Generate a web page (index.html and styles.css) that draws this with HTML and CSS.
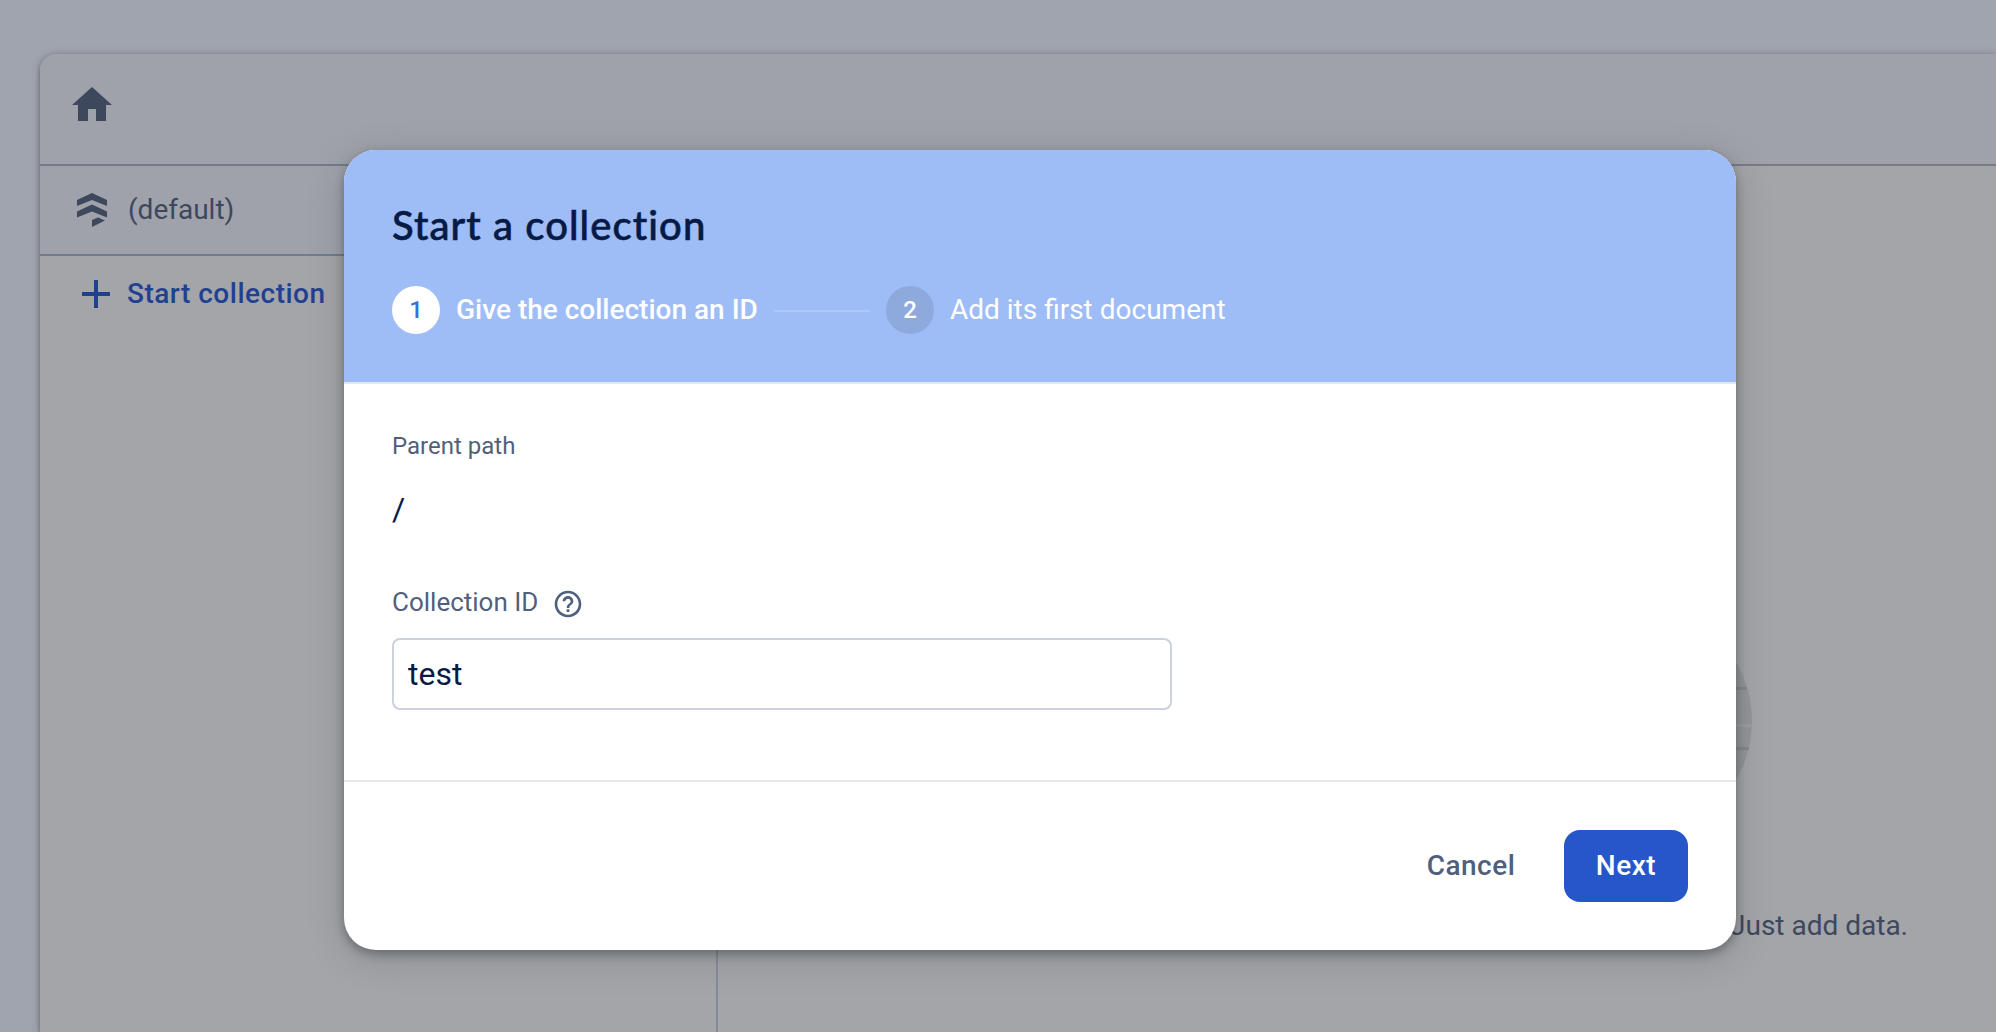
FILE: index.html
```html
<!DOCTYPE html>
<html lang="en">
<head>
<meta charset="utf-8">
<title>Start a collection</title>
<link rel="stylesheet" href="styles.css">
</head>
<body>
<main class="panel">
  <header class="breadcrumbs">
    <svg class="home-icon" viewBox="0 0 24 24"><path d="M10 20v-6h4v6h5v-8h3L12 3 2 12h3v8z"/></svg>
  </header>
  <div class="columns">
    <section class="root-column">
      <div class="database">
        <svg class="db-icon" viewBox="0 0 30 34"><path d="M0 7L15 0l15 7v6L15 7 0 13zM0 18.500l15-7 15 7v6l-15-6-15 6zM15 27l6-2.500 7 3L15 34z"/></svg>
        <span class="db-name">(default)</span>
      </div>
      <div class="start-collection">
        <svg class="plus-icon" viewBox="0 0 28 28"><path d="M12 0h4v12h12v4H16v12h-4V16H0v-4h12z"/></svg>
        <span class="start-label">Start collection</span>
      </div>
    </section>
    <section class="data-column">
      <svg class="illustration" viewBox="0 0 234 234"><circle cx="117" cy="117" r="117" fill="#949699"/><path d="M0 84.500h229M0 144.500h231" stroke="#86888b" stroke-width="3"/><path d="M0 121.500h234" stroke="#9b9da0" stroke-width="3"/></svg>
      <p class="empty-text">Your database is ready to go. Just add data.</p>
    </section>
  </div>
</main>

<div class="dialog" role="dialog">
  <header class="dialog-header">
    <h1 class="dialog-title">Start a collection</h1>
    <div class="steps">
      <span class="badge badge-active">1</span>
      <span class="step-label step-current">Give the collection an ID</span>
      <span class="step-line"></span>
      <span class="badge badge-next">2</span>
      <span class="step-label">Add its first document</span>
    </div>
  </header>
  <div class="dialog-body">
    <div class="label parent-label">Parent path</div>
    <div class="path">/</div>
    <div class="id-row">
      <label class="label id-label" for="cid">Collection ID</label>
      <svg class="help-icon" viewBox="1.500 1.500 21 21"><path d="M11 18h2v-2h-2v2zm1-16C6.480 2 2 6.480 2 12s4.480 10 10 10 10-4.480 10-10S17.520 2 12 2zm0 18c-4.410 0-8-3.590-8-8s3.590-8 8-8 8 3.590 8 8-3.590 8-8 8zm0-14c-2.210 0-4 1.790-4 4h2c0-1.100.9-2 2-2s2 .9 2 2c0 2-3 1.750-3 5h2c0-2.250 3-2.500 3-5 0-2.210-1.790-4-4-4z"/></svg>
    </div>
    <input class="id-input" id="cid" type="text" value="test">
  </div>
  <footer class="dialog-footer">
    <button class="button cancel">Cancel</button>
    <button class="button next">Next</button>
  </footer>
</div>
</body>
</html>
```
FILE: styles.css
```css
* { box-sizing: border-box; }
html { overflow: hidden; }
body {
  margin: 0;
  height: 1032px;
  padding: 54px 0 0 40px;
  overflow: hidden;
  background: #a0a4ae;
  font-family: Roboto, sans-serif;
  font-size: 28px;
  color: #3e485d;
}
.panel {
  display: flex;
  flex-direction: column;
  height: 978px;
  border-radius: 16px 0 0 0;
  background: #a4a5a8;
  box-shadow: 0 2px 4px rgba(50, 55, 60, .45), 0 1px 8px rgba(50, 55, 60, .3);
}
.breadcrumbs {
  height: 112px;
  padding: 27px 28px;
  border-bottom: 2px solid #757c89;
  border-radius: 16px 0 0 0;
  background: #9fa2aa;
}
.home-icon { display: block; width: 48px; height: 48px; fill: #3e485d; }
.columns { display: flex; flex: 1; }
.root-column { width: 678px; border-right: 2px solid #868c97; }
.database {
  display: flex;
  align-items: center;
  height: 90px;
  padding-left: 37px;
  border-bottom: 2px solid #757c89;
  background: #9fa2aa;
}
.db-icon { width: 30px; height: 34px; fill: #3e485d; }
.db-name { margin-left: 21px; padding-bottom: 2px; }
.start-collection {
  display: flex;
  align-items: center;
  height: 76px;
  padding-left: 42px;
  color: #214190;
}
.plus-icon { width: 28px; height: 28px; fill: #214190; }
.start-label { margin-left: 17px; padding-bottom: 2px; font-weight: 500; letter-spacing: .5px; }
.data-column { flex: 1; padding: 438px 0 0 800px; }
.illustration { display: block; width: 234px; height: 234px; }
.empty-text {
  display: flex;
  justify-content: flex-end;
  width: 390px;
  margin: 68px 0 0;
  line-height: 40px;
  white-space: nowrap;
}

.dialog {
  position: absolute;
  top: 150px;
  left: 344px;
  display: flex;
  flex-direction: column;
  width: 1392px;
  height: 800px;
  overflow: hidden;
  border-radius: 32px;
  background: #fff;
  box-shadow: 0 4px 10px rgba(40, 48, 52, .4), 0 8px 36px rgba(40, 48, 52, .22);
}
.dialog-header {
  height: 234px;
  padding: 47px 48px;
  border-bottom: 2px solid #e6e7ea;
  background: #9ebcf6;
}
.dialog-title {
  margin: 0;
  font: 500 40px/56px Lato, sans-serif;
  font-variant-ligatures: none;
  letter-spacing: 1.08px;
  -webkit-text-stroke: .6px #061a45;
  color: #061a45;
}
.steps { display: flex; align-items: center; height: 48px; margin-top: 33px; color: #fff; }
.badge {
  width: 48px;
  height: 48px;
  border-radius: 50%;
  font-size: 24px;
  font-weight: 500;
  line-height: 48px;
  text-align: center;
}
.badge-active { background: #fff; color: #366fe0; }
.badge-next { background: #8ea9dc; }
.step-label { margin-left: 16px; padding-bottom: 2px; white-space: nowrap; }
.step-current { width: 302px; font-weight: 500; }
.step-line { width: 96px; height: 2px; margin: 2px 16px 0; background: #b0c8f8; }
.dialog-body { height: 398px; padding: 46px 48px; border-bottom: 2px solid #e6e7ea; }
.label { font-size: 24px; line-height: 32px; color: #525f7c; }
.path { margin-top: 27px; font-size: 32px; line-height: 40px; color: #061a45; }
.id-row { display: flex; align-items: center; height: 32px; margin-top: 57px; }
.id-label { width: 162px; font-size: 26px; }
.help-icon { width: 28px; height: 28px; margin-top: 4px; fill: #525f7c; }
.id-input {
  display: block;
  width: 780px;
  height: 72px;
  margin-top: 20px;
  padding: 0 14px;
  border: 2px solid #cdd1dd;
  border-radius: 8px;
  background: #fff;
  font: 32px Roboto, sans-serif;
  color: #061a45;
}
.dialog-footer { display: flex; justify-content: flex-end; padding: 48px; }
.button {
  height: 72px;
  padding: 0 0 2px;
  border: 0;
  border-radius: 16px;
  background: none;
  font: 500 28px Roboto, sans-serif;
  letter-spacing: .5px;
}
.cancel { width: 154px; margin-right: 16px; color: #525f7c; }
.next { width: 124px; background: #2756ca; color: #fff; }
```
